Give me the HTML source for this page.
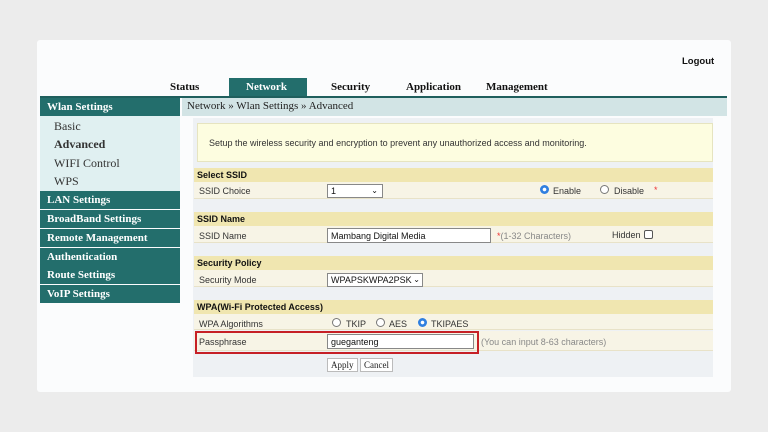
<!DOCTYPE html>
<html><head><meta charset="utf-8"><style>
*{margin:0;padding:0;box-sizing:border-box}
body{width:768px;height:432px;background:#ececec;position:relative;overflow:hidden;font-family:"Liberation Sans",sans-serif}
.a{position:absolute}
.panel{left:37px;top:40px;width:694px;height:352px;background:#fbfcfd;border-radius:3px}
.tab{font:bold 11px "Liberation Serif",serif;color:#111;top:81px}
.side{left:40px;width:140px;height:18px;background:#236e6c;color:#fff;font:bold 11px "Liberation Serif",serif;padding:3px 0 0 7px}
.sub{font:12px "Liberation Serif",serif;color:#333;left:54px}
.sec{left:194px;width:519px;height:14px;background:#f0e6b0;font:bold 9px "Liberation Sans",sans-serif;color:#111;padding:2px 0 0 3px}
.row{left:194px;width:519px;background:#f7f4e6;font:9px "Liberation Sans",sans-serif;color:#333;border-bottom:1px solid #e8e2c8}
.t9{font:9px "Liberation Sans",sans-serif;color:#333}
.inp{background:#fff;border:1px solid #888;font:9px "Liberation Sans",sans-serif;color:#111;padding:2px 3px}
.rad{width:9px;height:9px;border-radius:50%;border:1px solid #777;background:#fff}
.rad.on{border:none;background:radial-gradient(circle,#fff 0 1.6px,#2f7fe0 2px)}
.btn{background:#fff;border:1px solid #bbb;font:9px "Liberation Serif",serif;color:#222;padding:1px 3px;top:358px}
</style></head><body>
<div class="a panel"></div>
<div class="a" style="left:682px;top:56px;font:bold 9.5px 'Liberation Sans',sans-serif;color:#111">Logout</div>
<div class="a tab" style="left:170px">Status</div>
<div class="a" style="left:229px;top:78px;width:78px;height:19px;background:#236e6c"></div>
<div class="a tab" style="left:246px;color:#fff">Network</div>
<div class="a tab" style="left:331px">Security</div>
<div class="a tab" style="left:406px">Application</div>
<div class="a tab" style="left:486px">Management</div>
<div class="a" style="left:40px;top:96px;width:687px;height:2px;background:#1f5f5d"></div>
<div class="a" style="left:182px;top:98px;width:545px;height:18px;background:#d2e4e5;font:11px 'Liberation Serif',serif;color:#222;padding:2px 0 0 5px">Network » Wlan Settings » Advanced</div>
<div class="a side" style="top:98px">Wlan Settings</div>
<div class="a" style="left:40px;top:116px;width:140px;height:75px;background:#e0f0f1"></div>
<div class="a sub" style="top:119px">Basic</div>
<div class="a sub" style="top:137px;font-weight:bold">Advanced</div>
<div class="a sub" style="top:156px">WIFI Control</div>
<div class="a sub" style="top:174px">WPS</div>
<div class="a side" style="top:191px">LAN Settings</div>
<div class="a side" style="top:210px">BroadBand Settings</div>
<div class="a side" style="top:229px">Remote Management</div>
<div class="a side" style="top:248px">Authentication</div>
<div class="a side" style="top:266px">Route Settings</div>
<div class="a side" style="top:285px">VoIP Settings</div>
<div class="a" style="left:193px;top:118px;width:520px;height:259px;background:#eef1f4"></div>
<div class="a" style="left:197px;top:123px;width:516px;height:39px;background:#fdfde0;border:1px solid #e6e4c0"></div>
<div class="a t9" style="left:209px;top:138px">Setup the wireless security and encryption to prevent any unauthorized access and monitoring.</div>

<div class="a sec" style="top:168px">Select SSID</div>
<div class="a row" style="top:182px;height:17px"></div>
<div class="a t9" style="left:199px;top:186px">SSID Choice</div>
<div class="a inp" style="left:327px;top:184px;width:56px;height:14px;padding:1px 3px">1<span style="position:absolute;right:4px;font-size:8px">⌄</span></div>
<div class="a rad on" style="left:540px;top:185px"></div><div class="a t9" style="left:553px;top:186px">Enable</div>
<div class="a rad" style="left:600px;top:185px"></div><div class="a t9" style="left:614px;top:186px">Disable</div>
<div class="a t9" style="left:654px;top:185px;color:#e33">*</div>

<div class="a sec" style="top:212px">SSID Name</div>
<div class="a row" style="top:226px;height:17px"></div>
<div class="a t9" style="left:199px;top:231px">SSID Name</div>
<div class="a inp" style="left:327px;top:228px;width:164px;height:15px">Mambang Digital Media</div>
<div class="a t9" style="left:497px;top:231px;color:#888"><span style="color:#e33">*</span>(1-32 Characters)</div>
<div class="a t9" style="left:612px;top:230px">Hidden</div>
<div class="a" style="left:644px;top:230px;width:9px;height:9px;border:1px solid #555;border-radius:2px;background:#fff"></div>

<div class="a sec" style="top:256px">Security Policy</div>
<div class="a row" style="top:270px;height:17px"></div>
<div class="a t9" style="left:199px;top:275px">Security Mode</div>
<div class="a inp" style="left:327px;top:273px;width:96px;height:14px;padding:1px 3px">WPAPSKWPA2PSK<span style="position:absolute;right:2px;font-size:8px">⌄</span></div>

<div class="a sec" style="top:300px">WPA(Wi-Fi Protected Access)</div>
<div class="a row" style="top:314px;height:16px"></div>
<div class="a t9" style="left:199px;top:319px">WPA Algorithms</div>
<div class="a rad" style="left:332px;top:318px"></div><div class="a t9" style="left:346px;top:319px">TKIP</div>
<div class="a rad" style="left:376px;top:318px"></div><div class="a t9" style="left:389px;top:319px">AES</div>
<div class="a rad on" style="left:418px;top:318px"></div><div class="a t9" style="left:431px;top:319px">TKIPAES</div>
<div class="a row" style="top:331px;height:20px"></div>
<div class="a t9" style="left:199px;top:337px">Passphrase</div>
<div class="a inp" style="left:327px;top:334px;width:147px;height:15px">gueganteng</div>
<div class="a t9" style="left:481px;top:337px;color:#888">(You can input 8-63 characters)</div>
<div class="a" style="left:195px;top:331px;width:284px;height:23px;border:2px solid #c62026"></div>
<div class="a btn" style="left:327px">Apply</div>
<div class="a btn" style="left:360px">Cancel</div>
</body></html>
